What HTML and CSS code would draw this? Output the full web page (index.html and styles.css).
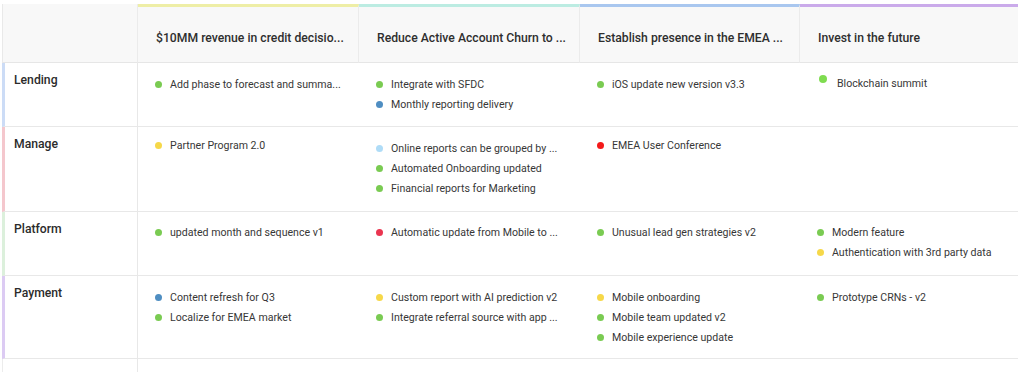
FILE: index.html
```html
<!DOCTYPE html>
<html>
<head>
<meta charset="utf-8">
<link rel="stylesheet" href="styles.css">
</head>
<body>
<div class="board">
  <div class="head head--corner"></div>
  <div class="head head--yellow"><span class="head__title">$10MM revenue in credit decisio...</span></div>
  <div class="head head--teal"><span class="head__title">Reduce Active Account Churn to ...</span></div>
  <div class="head head--blue"><span class="head__title">Establish presence in the EMEA ...</span></div>
  <div class="head head--purple"><span class="head__title">Invest in the future</span></div>

  <div class="label label--blue">Lending</div>
  <div class="cell">
    <div class="item"><span class="dot dot--green"></span>Add phase to forecast and summa...</div>
  </div>
  <div class="cell">
    <div class="item"><span class="dot dot--green"></span>Integrate with SFDC</div>
    <div class="item"><span class="dot dot--blue"></span>Monthly reporting delivery</div>
  </div>
  <div class="cell">
    <div class="item"><span class="dot dot--green"></span>iOS update new version v3.3</div>
  </div>
  <div class="cell">
    <div class="item item--raised"><span class="dot dot--lime"></span>Blockchain summit</div>
  </div>

  <div class="label label--pink">Manage</div>
  <div class="cell cell--up">
    <div class="item"><span class="dot dot--yellow"></span>Partner Program 2.0</div>
  </div>
  <div class="cell">
    <div class="item"><span class="dot dot--sky"></span>Online reports can be grouped by ...</div>
    <div class="item"><span class="dot dot--green"></span>Automated Onboarding updated</div>
    <div class="item"><span class="dot dot--green"></span>Financial reports for Marketing</div>
  </div>
  <div class="cell cell--up">
    <div class="item"><span class="dot dot--red"></span>EMEA User Conference</div>
  </div>
  <div class="cell"></div>

  <div class="label label--green">Platform</div>
  <div class="cell cell--mid">
    <div class="item"><span class="dot dot--green"></span>updated month and sequence v1</div>
  </div>
  <div class="cell cell--mid">
    <div class="item"><span class="dot dot--rose"></span>Automatic update from Mobile to ...</div>
  </div>
  <div class="cell cell--mid">
    <div class="item"><span class="dot dot--green"></span>Unusual lead gen strategies v2</div>
  </div>
  <div class="cell cell--mid">
    <div class="item"><span class="dot dot--green"></span>Modern feature</div>
    <div class="item"><span class="dot dot--yellow"></span>Authentication with 3rd party data</div>
  </div>

  <div class="label label--lavender">Payment</div>
  <div class="cell">
    <div class="item"><span class="dot dot--blue"></span>Content refresh for Q3</div>
    <div class="item"><span class="dot dot--green"></span>Localize for EMEA market</div>
  </div>
  <div class="cell">
    <div class="item"><span class="dot dot--yellow"></span>Custom report with AI prediction v2</div>
    <div class="item"><span class="dot dot--green"></span>Integrate referral source with app ...</div>
  </div>
  <div class="cell">
    <div class="item"><span class="dot dot--yellow"></span>Mobile onboarding</div>
    <div class="item"><span class="dot dot--green"></span>Mobile team updated v2</div>
    <div class="item"><span class="dot dot--green"></span>Mobile experience update</div>
  </div>
  <div class="cell">
    <div class="item"><span class="dot dot--green"></span>Prototype CRNs - v2</div>
  </div>

  <div class="label label--plain"></div>
  <div class="cell cell--last"></div>
  <div class="cell cell--last"></div>
  <div class="cell cell--last"></div>
  <div class="cell cell--last"></div>
</div>
</body>
</html>
```

FILE: styles.css
```css
html, body {
  margin: 0;
  padding: 0;
  background: #ffffff;
}

body {
  font-family: Roboto, "Liberation Sans", Arial, sans-serif;
  color: #333333;
}

.board {
  margin: 4px 0 0 2px;
  width: 1016px;
  height: 368px;
  overflow: hidden;
  display: grid;
  grid-template-columns: 136px 221px 221px 220px 218px;
  grid-template-rows: 59px 64px 85px 64px 83px 40px;
}

.head {
  box-sizing: border-box;
  background: #f8f8f8;
  border-top: 3px solid transparent;
  border-bottom: 1px solid #e6e6e6;
  border-right: 1px solid #ebebeb;
  display: flex;
  align-items: center;
  padding: 6px 0 0 18px;
  font-size: 12.2px;
  font-weight: 500;
  color: #2e2e2e;
  white-space: nowrap;
  overflow: hidden;
}

.head--corner {
  border-top: 0;
  border-left: 1px solid #e9e9e9;
}

.head--yellow { border-top-color: #eeeea6; }
.head--teal { border-top-color: #bcece2; }
.head--blue { border-top-color: #a9c7ef; }
.head--purple { border-top-color: #caaaea; border-right: 0; }

.label {
  box-sizing: border-box;
  border-left: 3px solid #e6e6e6;
  border-bottom: 1px solid #e8e8e8;
  border-right: 1px solid #e8e8e8;
  padding: 7px 0 0 9px;
  line-height: 20px;
  font-size: 12.2px;
  font-weight: 500;
  color: #2b2b2b;
}

.label--blue { border-left-color: #ccdcf6; }
.label--pink { border-left-color: #f4c7cd; }
.label--green { border-left-color: #dcf0dc; }
.label--lavender { border-left-color: #dccbf3; }
.label--plain { border-left: 1px solid #ececec; border-bottom: 0; }

.cell {
  box-sizing: border-box;
  border-bottom: 1px solid #e8e8e8;
  padding: 11px 0 0 17px;
  display: flex;
  flex-direction: column;
}

.cell--up { padding-top: 8px; }
.cell--mid { padding-top: 10px; }
.cell--last { border-bottom: 0; }

.item {
  display: flex;
  align-items: center;
  gap: 8px;
  height: 20px;
  font-size: 10.6px;
  color: #373737;
  white-space: nowrap;
}

.dot {
  flex: none;
  width: 7px;
  height: 7px;
  border-radius: 50%;
}

.item--raised {
  align-items: flex-start;
  gap: 10px;
  padding-left: 2px;
  line-height: 20px;
}

.item--raised .dot {
  width: 8px;
  height: 8px;
  margin-top: 1px;
}

.dot--green { background: #7acb52; }
.dot--lime { background: #7fdc50; }
.dot--blue { background: #4f8ec2; }
.dot--yellow { background: #f6d849; }
.dot--sky { background: #afdcf7; }
.dot--red { background: #f41a1a; }
.dot--rose { background: #ea3550; }
```
